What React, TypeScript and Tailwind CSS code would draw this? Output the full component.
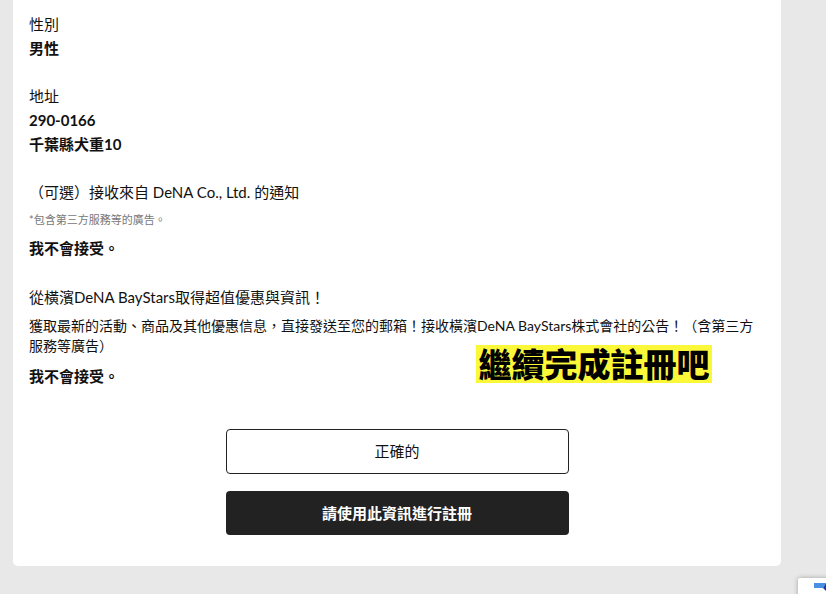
const font = {
  fontFamily: '"Lato", "Noto Sans CJK TC", "Noto Sans CJK SC", sans-serif',
};

export default function App() {
  return (
    <div className="relative h-[594px] w-[826px] overflow-hidden bg-[#e8e8e8]" style={font}>
      <div className="ml-[13px] w-[768px] rounded-b-[5px] bg-white px-4 pt-3 pb-[31px] text-[#111]">
        {/* Gender */}
        <p className="text-[15px] leading-6">性別</p>
        <p className="text-[15px] font-bold leading-6">男性</p>

        {/* Address */}
        <p className="mt-6 text-[15px] leading-6">地址</p>
        <p className="text-[15px] font-bold leading-6">290-0166</p>
        <p className="text-[15px] font-bold leading-6">千葉縣犬重10</p>

        {/* DeNA notice */}
        <p className="mt-6 text-[15px] leading-6">（可選）接收來自 DeNA Co., Ltd. 的通知</p>
        <p className="mt-2 text-[11px] leading-4 text-[#777]">*包含第三方服務等的廣告。</p>
        <p className="mt-2 text-[15px] font-bold leading-6">我不會接受。</p>

        {/* BayStars notice */}
        <p className="mt-[25px] text-[15px] leading-6">從橫濱DeNA BayStars取得超值優惠與資訊！</p>
        <p className="mt-[7px] text-[14px] leading-5">
          獲取最新的活動、商品及其他優惠信息，直接發送至您的郵箱！接收橫濱DeNA BayStars株式會社的公告！（含第三方服務等廣告）
        </p>
        <p className="mt-2 text-[15px] font-bold leading-6">我不會接受。</p>

        {/* Actions */}
        <div className="mt-[41px] flex flex-col items-center gap-[17px]">
          <button className="h-[45px] w-[343px] rounded-[4px] border border-[#222] bg-white text-[15px] text-[#111]">
            正確的
          </button>
          <button className="h-[44px] w-[343px] rounded-[4px] bg-[#222222] text-[15px] font-bold text-white">
            請使用此資訊進行註冊
          </button>
        </div>
      </div>

      {/* Highlight annotation */}
      <div className="absolute left-[476px] top-[345px] flex h-[38px] w-[236px] items-center justify-center bg-[#fbf83a] text-[33px] font-black leading-none text-black">
        繼續完成註冊吧
      </div>

      {/* reCAPTCHA badge */}
      <div className="absolute left-[798px] top-[578px] h-[60px] w-[256px] rounded-[2px] bg-white shadow-[0_0_5px_rgba(0,0,0,0.3)]">
        <svg className="absolute left-[12px] top-[3px]" width="20" height="20" viewBox="0 0 20 20">
          <path d="M4 2h12l-3 5H4z" fill="#4a90e2" />
          <path d="M13 7l3-5v8z" fill="#1c3aa9" />
        </svg>
      </div>
    </div>
  );
}
